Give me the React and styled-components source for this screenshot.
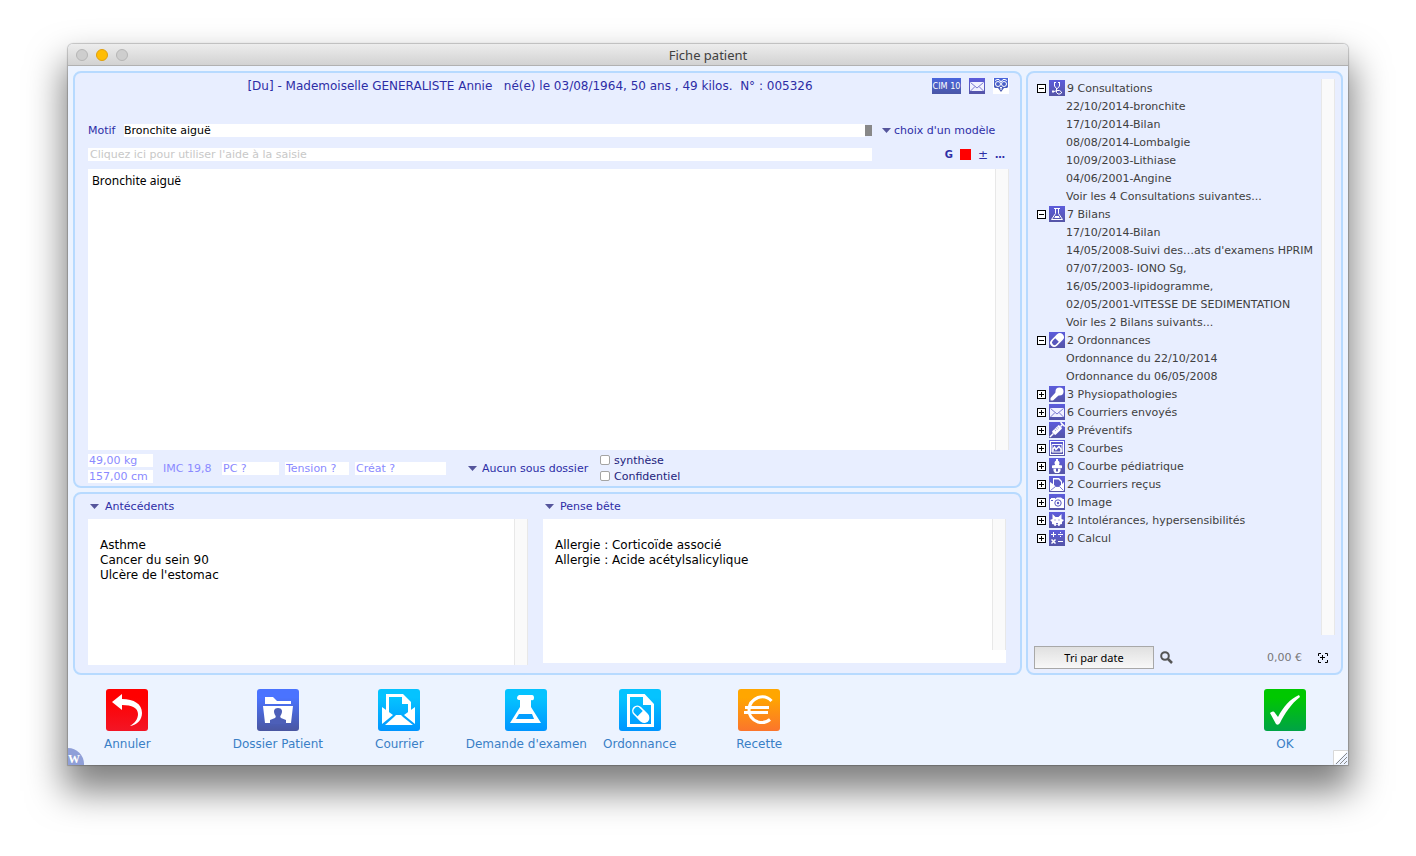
import React, { useState } from 'react'
import styled, { createGlobalStyle } from 'styled-components'

const GlobalStyle = createGlobalStyle`
  *, *::before, *::after {
    box-sizing: border-box;
  }
  body {
    margin: 0;
    background: #ffffff;
    font-family: Verdana, 'DejaVu Sans', sans-serif;
    font-size: 11px;
    color: #2d2da6;
  }
  button, input, select, textarea {
    margin: 0;
    padding: 0;
    border: 0;
    border-radius: 0;
    background: none;
    font: inherit;
    color: inherit;
    outline: none;
  }
  svg {
    display: block;
    flex: none;
  }
`

const Page = styled.div`
  padding: 44px 68px 91px;
`

const Window = styled.div`
  position: relative;
  background: #ecf3ff;
  border-radius: 5px 5px 0 0;
  box-shadow: 0 0 1px 1px rgba(0, 0, 0, 0.2), 0 22px 36px 4px rgba(0, 0, 0, 0.5);
`

const TitleBar = styled.header`
  display: grid;
  grid-template-columns: 1fr auto 1fr;
  align-items: center;
  height: 22px;
  padding: 0 8px;
  border-radius: 5px 5px 0 0;
  border-bottom: 1px solid #b1b1b1;
  background: linear-gradient(#ededed, #d2d2d2);
`

const Lights = styled.div`
  display: flex;
  gap: 8px;
`

const Light = styled.span`
  width: 12px;
  height: 12px;
  border-radius: 50%;
  border: 1px solid ${(props) => (props.$on ? '#e0a00d' : '#b6b6b6')};
  background: ${(props) => (props.$on ? '#ffbd05' : '#cecece')};
`

const Title = styled.h1`
  margin: 0;
  font: 13px 'Noto Sans', sans-serif;
  color: #404040;
`

const Content = styled.main`
  display: grid;
  grid-template-columns: minmax(0, 1fr) 317px;
  gap: 4px;
  padding: 5px 5px 0;
`

const LeftColumn = styled.div`
  display: flex;
  flex-direction: column;
  gap: 4px;
`

const Panel = styled.section`
  display: flex;
  flex-direction: column;
  border: 2px solid #b7daff;
  border-radius: 8px;
  background: #e8eeff;
`

const VisitPanel = styled(Panel)`
  padding: 0 11px 0 13px;
`

const PatientRow = styled.div`
  display: flex;
  align-items: center;
  height: 26px;
  margin-bottom: 14px;
`

const PatientName = styled.h2`
  flex: 1;
  margin: 0;
  padding-left: 40px;
  font-size: 12px;
  font-weight: normal;
  text-align: center;
  white-space: pre;
`

const HeaderIcons = styled.div`
  display: flex;
  align-items: center;
  gap: 8px;
`

const IconButton = styled.button`
  display: block;
  color: #2d2da6;
`

const CimButton = styled.button`
  width: 29px;
  height: 16px;
  background: linear-gradient(#4a66dd, #4a56a6);
  color: #ffffff;
  font: 9px/16px 'DejaVu Sans Condensed', sans-serif;
  white-space: nowrap;
`

const FormRow = styled.div`
  display: flex;
  align-items: center;
  height: 13px;
  margin-top: 11px;
`

const MotifLabel = styled.label`
  width: 36px;
`

const LineInput = styled.input`
  flex: 1;
  min-width: 0;
  height: 13px;
  background: #ffffff;
  color: #000000;
  &::placeholder {
    color: #c8c8c8;
    opacity: 1;
  }
`

const HelpInput = styled(LineInput)`
  padding-left: 2px;
`

const Grip = styled.span`
  width: 7px;
  height: 11px;
  background: #888888;
`

const RowEnd = styled.div`
  display: flex;
  align-items: center;
  width: 137px;
  padding-left: 10px;
  gap: 3px;
`

const FormatTools = styled(RowEnd)`
  justify-content: flex-end;
  padding-right: 4px;
  gap: 7px;
  font-size: 10px;
  font-weight: bold;
`

const SignButton = styled(IconButton)`
  font-size: 12px;
  font-weight: normal;
  line-height: 12px;
`

const RedSwatch = styled.button`
  width: 11px;
  height: 11px;
  background: #ff0000;
`

const Select = styled.select`
  appearance: none;
  color: #2d2da6;
`

const NoteBox = styled.div`
  display: flex;
  height: ${(props) => props.$height}px;
  background: #ffffff;
`

const VisitNote = styled(NoteBox)`
  margin-top: 8px;
`

const Note = styled.textarea`
  flex: 1;
  min-width: 0;
  resize: none;
  padding: 19px 12px;
  font-size: 12px;
  line-height: 15px;
  color: #000000;
`

const Observation = styled(Note)`
  padding: 4px;
  font-family: 'Noto Sans', sans-serif;
`

const Track = styled.div`
  width: 14px;
  margin-bottom: ${(props) => props.$short || 0}px;
  border: solid #e8e8e8;
  border-width: 0 1px;
  background: #fafafa;
`

const MeasureRow = styled.div`
  display: flex;
  align-items: center;
  height: 36px;
`

const Stack = styled.div`
  display: flex;
  flex-direction: column;
  gap: 3px;
`

const Measure = styled.input`
  width: ${(props) => props.$width}px;
  height: 13px;
  padding-left: 1px;
  background: #ffffff;
  color: #8a8aff;
  &::placeholder {
    color: #8a8aff;
    opacity: 1;
  }
`

const Measures = styled.div`
  display: flex;
  gap: 6px;
  flex: none;
`

const Imc = styled.span`
  width: 69px;
  padding-left: 10px;
  color: #8a8aff;
  white-space: nowrap;
`

const Folder = styled.div`
  display: flex;
  align-items: center;
  gap: 5px;
  width: 132px;
  margin-left: 22px;
`

const Check = styled.label`
  display: flex;
  align-items: center;
  gap: 4px;
  height: 13px;
  color: #23237c;
`

const CheckBox = styled.input`
  appearance: none;
  width: 10px;
  height: 10px;
  border: 1px solid #a4a4a4;
  border-radius: 2px;
  background: #ffffff;
`

const NotesPanel = styled(Panel)`
  flex-direction: row;
  align-items: flex-start;
  gap: 15px;
  padding: 0 14px 8px 13px;
`

const NoteColumn = styled.div`
  flex: ${(props) => props.$grow} 1 0;
  min-width: 0;
`

const NoteTitle = styled.button`
  display: flex;
  align-items: center;
  gap: 6px;
  height: 25px;
  padding-left: 2px;
`

const SidePanel = styled(Panel)`
  padding: 6px 6px 4px;
`

const TreeArea = styled.div`
  display: flex;
  flex: 1;
  justify-content: space-between;
`

const Tree = styled.ul`
  margin: 0;
  padding: 0 0 0 3px;
  list-style: none;
  line-height: 20px;
  color: #404040;
  white-space: nowrap;
`

const SubTree = styled.ul`
  margin: 0;
  padding: 0 0 0 29px;
  list-style: none;
`

const Leaf = styled.li`
  height: 18px;
`

const TreeRow = styled.div`
  display: flex;
  align-items: center;
  height: 18px;
  gap: 2px;
`

const TreeLabel = styled.span`
  height: 18px;
`

const Toggle = styled.button`
  height: 10px;
  margin-right: 1px;
`

const SideFooter = styled.div`
  display: flex;
  align-items: center;
  height: 23px;
  margin-top: 11px;
  padding-right: 7px;
`

const SortButton = styled.button`
  width: 120px;
  height: 23px;
  margin-right: 6px;
  border: 1px solid #a8a8a8;
  background: linear-gradient(#e0e0e0, #f8f8f8);
  font: 11px 'Noto Sans', sans-serif;
  color: #000000;
`

const Price = styled.span`
  margin: 0 16px 0 auto;
  color: #777777;
`

const ActionBar = styled.footer`
  display: flex;
  height: 90px;
  padding: 14px 42px 0 36px;
`

const Action = styled.button`
  display: flex;
  flex-direction: column;
  align-items: center;
  align-self: flex-start;
  gap: 4px;
  margin-left: ${(props) => props.$space};
  font-size: 12px;
  line-height: 18px;
  color: #3a7fc6;
  white-space: nowrap;
`

const Corner = styled.span`
  position: absolute;
  left: 0;
  bottom: 0;
  width: 16px;
  height: 17px;
  border-radius: 0 16px 0 0;
  background: #8f9fd8;
  color: #ffffff;
  font: bold 12px/22px 'Liberation Serif', serif;
`

const Resize = styled.span`
  position: absolute;
  right: 0;
  bottom: 0;
`

const Arrow = () => (
  <svg width="9" height="5" viewBox="0 0 9 5">
    <path d="M0 0h9L4.500 5z" fill="#55559c" />
  </svg>
)

const glyphs = {
  steth: (
    <g fill="none" stroke="#fff">
      <path d="M5 2.500h2M9 2.500h2M5.500 3v3L7.500 8.500h1L10.500 6V3M7.500 8v3M3 11.500h2M4 10v3" />
      <path d="M5 11.500l3-1h2.500l2 1.500v1l-1.500 1H9L7.500 12.500v-2" />
    </g>
  ),
  flask: (
    <g fill="none" stroke="#fff">
      <path d="M5 2.500h6M6.500 3v4.500L2.500 13.500h11L9.500 7.500V3" />
      <path d="M5.500 11.500h5" />
      <path d="M6 10.500h4" />
    </g>
  ),
  pill: (
    <g transform="rotate(-45 8 8)">
      <rect x="0" y="4" width="16" height="8" rx="4" fill="#fff" />
      <path d="M8 5.500H4.500a2.500 2.500 0 0 0 0 5H8z" fill="#5757bd" />
    </g>
  ),
  key: (
    <g fill="#fff">
      <circle cx="10.500" cy="5.500" r="4" />
      <path d="M7 6l3 3-6 5.500H1.500v-2.500z" />
    </g>
  ),
  mail: (
    <g>
      <rect x="1" y="4" width="14" height="9" fill="#f2f2ff" />
      <path d="M1.500 4.500L8 10l6.500-5.500M1.500 13L6 8.500M14.500 13L10 8.500" fill="none" stroke="#7a7ad0" />
    </g>
  ),
  syringe: (
    <g transform="rotate(-45 8 8)">
      <rect x="3" y="5.500" width="10" height="5" rx="1" fill="#fff" />
      <path d="M-2 8h5M13 8h3M16 5v6" stroke="#fff" strokeWidth="1.500" />
      <path d="M6.500 6v2M8.500 6v2M10.500 6v2" stroke="#7a7acb" strokeWidth=".7" />
    </g>
  ),
  chart: (
    <g fill="none" stroke="#fff">
      <rect x="1.500" y="1.500" width="13" height="13" />
      <path d="M3 4.500h10v7.500H3z" />
      <path d="M4 11.500V9l1.500-2L7 9.500 8.500 8 10 6.500 12 9v3" strokeWidth="1.500" />
    </g>
  ),
  baby: (
    <g fill="#fff">
      <circle cx="8" cy="5" r="2.500" />
      <path d="M7 1h2v2H7zM3 7.500l3-.5h4l3 .500V10l-2 .500H5L3 10z" />
      <path d="M4.500 11h7v2L10 15H6l-1.500-2z" />
      <path d="M7 10.500h2v3H7z" fill="#5757b5" />
    </g>
  ),
  letter: (
    <g>
      <path d="M1 6l3 2V2h6l3 3v3l2-2v9H1z" fill="#fff" />
      <path d="M5 3.500h4.500L12 6v3L9.500 10.500H7L5 9z" fill="#5a5ac6" />
      <path d="M1.500 14.500l5-4h4l4 4" fill="none" stroke="#5a5ac6" strokeWidth=".8" />
    </g>
  ),
  camera: (
    <g>
      <path d="M1 5h1V4h4v1l2-1.500h4L14 5h1v9H1z" fill="#fff" />
      <circle cx="9" cy="9" r="3.200" fill="none" stroke="#5a5ac0" />
      <circle cx="9" cy="9" r="1.200" fill="#5a5ac0" />
      <path d="M2 6.500h2" stroke="#5a5ac0" />
    </g>
  ),
  cat: (
    <g>
      <path d="M3.500 2l3 3h3l3-3v5l2.500 1-2 2v2l-2 .500-.5 1.500h-1l-1-1.500h-1l-1 1.500h-1L5 12.500 3 12v-2L1 8l2.500-1z" fill="#fff" />
      <path d="M5.500 8h1M10.500 8h-1M7 11.500h2" stroke="#5a5ac0" strokeWidth=".9" />
    </g>
  ),
  calc: (
    <g stroke="#fff" strokeWidth="1">
      <path d="M2 4.500h5M4.500 2v5M9 4.500h5M11 2.500h1M11 6.500h1M9 11.500h5" />
      <path d="M2.500 9.500l4 4M6.500 9.500l-4 4" strokeWidth="1.500" />
    </g>
  ),
  owl: (
    <g fill="none" stroke="#fff">
      <path d="M0 16V8l2 2h3l3 4 3-4h3l2-2v8z" fill="#fff" stroke="none" />
      <path d="M.5 0v9M15.500 0v9M2 2.500L4 1.500h2L8 4l2-2.500h2l2 1" />
      <circle cx="5" cy="6" r="2.500" />
      <circle cx="11" cy="6" r="2.500" />
      <path d="M7 9.500h2M8 9v3" />
    </g>
  ),
}

const Glyph = ({ name }) => (
  <svg width="16" height="16" viewBox="0 0 16 16">
    <defs>
      <linearGradient id={`g-${name}`} x2="0" y2="1">
        <stop offset="0" stopColor={name === 'owl' ? '#4a66dd' : '#5c5cdc'} />
        <stop offset="1" stopColor={name === 'owl' ? '#4a56a6' : '#5555a6'} />
      </linearGradient>
    </defs>
    <rect width="16" height="16" fill={`url(#g-${name})`} />
    {glyphs[name]}
  </svg>
)

const ToggleMark = ({ open }) => (
  <svg width="9" height="9" viewBox="0 0 9 9" fill="none" stroke="#000">
    <rect x=".5" y=".5" width="8" height="8" fill="#fff" />
    <path d={open ? 'M2 4.500h5' : 'M2 4.500h5M4.500 2v5'} />
  </svg>
)

const tiles = {
  undo: {
    from: '#ff0000',
    to: '#f31525',
    art: <path d="M6 13L16 5v5c12 0 20 5 20 14 0 7-5 12-12 13 5-3 8-7 8-12 0-6-6-9-16-9v5z" fill="#fff" />,
  },
  folder: {
    from: '#4a73ff',
    to: '#4a56a0',
    art: (
      <g>
        <path d="M8 8h8l4 4h14v3H8zM6 17h30l-2 17H8z" fill="#fff" />
        <path d="M13 35v-4l5-2c1-1 1-2 0-3-2-4-1-7 3-7s5 3 3 7c-1 1-1 2 0 3l5 2v4z" fill="#4d5fb8" />
      </g>
    ),
  },
  mail: {
    from: '#05c3ff',
    to: '#0095ff',
    art: (
      <g fill="#fff">
        <path d="M8 5h17l8 8v10l-3 1V15h-6V8H11v16l-3-2z" />
        <path d="M24 6l8 8h-8z" />
        <path d="M4 18l11 8L4 35zM37 18l-11 8 11 9z" />
        <path d="M7 36l9-8 2-2h5l2 2 10 8z" />
      </g>
    ),
  },
  flask: {
    from: '#05c3ff',
    to: '#0095ff',
    art: (
      <g>
        <path d="M14 6h13q2 0 2 3t-3 2v7l10 16H5l10-16v-7q-3 0-3-2t2-3z" fill="#fff" />
        <path d="M14 25h13l2 5H11z" fill="#049eff" />
      </g>
    ),
  },
  pill: {
    from: '#05c3ff',
    to: '#0095ff',
    art: (
      <g>
        <path d="M9.500 6.500H25l8.500 9v21h-24z" fill="none" stroke="#fff" strokeWidth="3" />
        <path d="M24 6l10 10H24z" fill="#fff" />
        <g transform="rotate(45 21.500 25)">
          <rect x="12.500" y="20.500" width="18" height="9" rx="4.500" fill="none" stroke="#fff" strokeWidth="1.500" />
          <path d="M21 20h6a5 5 0 0 1 0 10h-6z" fill="#fff" />
        </g>
      </g>
    ),
  },
  euro: {
    from: '#ffa600',
    to: '#fb752c',
    art: (
      <g fill="none" stroke="#fff" strokeWidth="3">
        <path d="M33.500 12C30 8 25 7 20 8.500c-12 5-12 20 0 24.500 5 1.500 9 0 12-2.500" />
        <path d="M7 18.500h24M6 23.500h24" />
      </g>
    ),
  },
  ok: {
    from: '#00c800',
    to: '#00a346',
    art: <path d="M6 24c2-2 4-2 5 0l3 4C19 18 26 10 35 6l1 2C27 15 21 24 16 34q-2 3-4 1z" fill="#fff" />,
  },
}

const Tile = ({ name }) => (
  <svg width="42" height="42" viewBox="0 0 42 42">
    <defs>
      <linearGradient id={`t-${name}`} x2="0" y2="1">
        <stop offset=".2" stopColor={tiles[name].from} />
        <stop offset="1" stopColor={tiles[name].to} />
      </linearGradient>
    </defs>
    <rect width="42" height="42" rx="3" fill={`url(#t-${name})`} />
    {tiles[name].art}
  </svg>
)

const folders = [
  {
    icon: 'steth',
    label: '9 Consultations',
    items: [
      '22/10/2014-bronchite',
      '17/10/2014-Bilan',
      '08/08/2014-Lombalgie',
      '10/09/2003-Lithiase',
      '04/06/2001-Angine',
      'Voir les 4 Consultations suivantes...',
    ],
  },
  {
    icon: 'flask',
    label: '7 Bilans',
    items: [
      '17/10/2014-Bilan',
      "14/05/2008-Suivi des…ats d'examens HPRIM",
      '07/07/2003- IONO Sg,',
      '16/05/2003-lipidogramme,',
      '02/05/2001-VITESSE DE SEDIMENTATION',
      'Voir les 2 Bilans suivants...',
    ],
  },
  { icon: 'pill', label: '2 Ordonnances', items: ['Ordonnance du 22/10/2014', 'Ordonnance du 06/05/2008'] },
  { icon: 'key', label: '3 Physiopathologies' },
  { icon: 'mail', label: '6 Courriers envoyés' },
  { icon: 'syringe', label: '9 Préventifs' },
  { icon: 'chart', label: '3 Courbes' },
  { icon: 'baby', label: '0 Courbe pédiatrique' },
  { icon: 'letter', label: '2 Courriers reçus' },
  { icon: 'camera', label: '0 Image' },
  { icon: 'cat', label: '2 Intolérances, hypersensibilités' },
  { icon: 'calc', label: '0 Calcul' },
]

const actions = [
  { tile: 'undo', label: 'Annuler', space: '0' },
  { tile: 'folder', label: 'Dossier Patient', space: '82px' },
  { tile: 'mail', label: 'Courrier', space: '52px' },
  { tile: 'flask', label: "Demande d'examen", space: '42px' },
  { tile: 'pill', label: 'Ordonnance', space: '16px' },
  { tile: 'euro', label: 'Recette', space: '60px' },
  { tile: 'ok', label: 'OK', space: 'auto' },
]

function FolderNode({ icon, label, items }) {
  const [open, setOpen] = useState(Boolean(items))
  return (
    <li>
      <TreeRow>
        <Toggle aria-label={label} aria-expanded={open} onClick={() => setOpen(!open)}>
          <ToggleMark open={open} />
        </Toggle>
        <Glyph name={icon} />
        <TreeLabel>{label}</TreeLabel>
      </TreeRow>
      {open && items && (
        <SubTree>
          {items.map((item) => (
            <Leaf key={item}>{item}</Leaf>
          ))}
        </SubTree>
      )}
    </li>
  )
}

function Visit() {
  return (
    <VisitPanel>
      <PatientRow>
        <PatientName>
          {'[Du] - Mademoiselle GENERALISTE Annie   né(e) le 03/08/1964, 50 ans , 49 kilos.  N° : 005326'}
        </PatientName>
        <HeaderIcons>
          <CimButton>CIM 10</CimButton>
          <IconButton aria-label="Courrier">
            <Glyph name="mail" />
          </IconButton>
          <IconButton aria-label="Aide">
            <Glyph name="owl" />
          </IconButton>
        </HeaderIcons>
      </PatientRow>
      <FormRow>
        <MotifLabel htmlFor="motif">Motif</MotifLabel>
        <LineInput id="motif" defaultValue="Bronchite aiguë" />
        <Grip />
        <RowEnd>
          <Arrow />
          <Select aria-label="Modèle">
            <option>choix d'un modèle</option>
          </Select>
        </RowEnd>
      </FormRow>
      <FormRow>
        <HelpInput aria-label="Aide à la saisie" placeholder="Cliquez ici pour utiliser l'aide à la saisie" />
        <FormatTools>
          <IconButton>G</IconButton>
          <RedSwatch aria-label="Couleur" />
          <SignButton>±</SignButton>
          <IconButton>…</IconButton>
        </FormatTools>
      </FormRow>
      <VisitNote $height={281}>
        <Observation aria-label="Observation" defaultValue="Bronchite aiguë" />
        <Track />
      </VisitNote>
      <MeasureRow>
        <Stack>
          <Measure $width={65} aria-label="Poids" defaultValue="49,00 kg" />
          <Measure $width={65} aria-label="Taille" defaultValue="157,00 cm" />
        </Stack>
        <Imc>IMC 19,8</Imc>
        <Measures>
          <Measure $width={57} aria-label="PC" placeholder="PC ?" />
          <Measure $width={64} aria-label="Tension" placeholder="Tension ?" />
          <Measure $width={91} aria-label="Créat" placeholder="Créat ?" />
        </Measures>
        <Folder>
          <Arrow />
          <Select aria-label="Sous dossier">
            <option>Aucun sous dossier</option>
          </Select>
        </Folder>
        <Stack>
          <Check>
            <CheckBox type="checkbox" />
            synthèse
          </Check>
          <Check>
            <CheckBox type="checkbox" />
            Confidentiel
          </Check>
        </Stack>
      </MeasureRow>
    </VisitPanel>
  )
}

function Notes() {
  return (
    <NotesPanel>
      <NoteColumn $grow={440}>
        <NoteTitle>
          <Arrow />
          Antécédents
        </NoteTitle>
        <NoteBox $height={146}>
          <Note aria-label="Antécédents" defaultValue={"Asthme\nCancer du sein 90\nUlcère de l'estomac"} />
          <Track />
        </NoteBox>
      </NoteColumn>
      <NoteColumn $grow={463}>
        <NoteTitle>
          <Arrow />
          Pense bête
        </NoteTitle>
        <NoteBox $height={144}>
          <Note
            aria-label="Pense bête"
            defaultValue={'Allergie : Corticoïde associé\nAllergie : Acide acétylsalicylique'}
          />
          <Track $short={13} />
        </NoteBox>
      </NoteColumn>
    </NotesPanel>
  )
}

function Sidebar() {
  return (
    <SidePanel as="aside">
      <TreeArea>
        <Tree>
          {folders.map((folder) => (
            <FolderNode key={folder.label} {...folder} />
          ))}
        </Tree>
        <Track />
      </TreeArea>
      <SideFooter>
        <SortButton>Tri par date</SortButton>
        <IconButton aria-label="Rechercher">
          <svg width="13" height="13" viewBox="0 0 13 13" fill="none" stroke="#555">
            <circle cx="5" cy="5" r="3.800" strokeWidth="2" />
            <path d="M8 8l4 4" strokeWidth="2.500" />
          </svg>
        </IconButton>
        <Price>0,00 €</Price>
        <IconButton aria-label="Agrandir">
          <svg width="10" height="10" viewBox="0 0 10 10" fill="none" stroke="#000">
            <path d="M.5 3V.5H3M7 .5h2.500V3M9.500 7v2.500H7M3 9.500H.5V7M2 4.500h5M4.500 2v5" />
          </svg>
        </IconButton>
      </SideFooter>
    </SidePanel>
  )
}

export default function App() {
  return (
    <Page>
      <GlobalStyle />
      <Window>
        <TitleBar>
          <Lights>
            <Light />
            <Light $on />
            <Light />
          </Lights>
          <Title>Fiche patient</Title>
        </TitleBar>
        <Content>
          <LeftColumn>
            <Visit />
            <Notes />
          </LeftColumn>
          <Sidebar />
        </Content>
        <ActionBar>
          {actions.map((action) => (
            <Action key={action.label} $space={action.space}>
              <Tile name={action.tile} />
              {action.label}
            </Action>
          ))}
        </ActionBar>
        <Corner>W</Corner>
        <Resize>
          <svg width="15" height="15" viewBox="0 0 15 15">
            <path d="M.5 15V.5H15" fill="#fff" stroke="#d8d8d8" />
            <path d="M3 14L14 3M7 14l7-7M11 14l3-3" stroke="#8a8a8a" />
          </svg>
        </Resize>
      </Window>
    </Page>
  )
}
